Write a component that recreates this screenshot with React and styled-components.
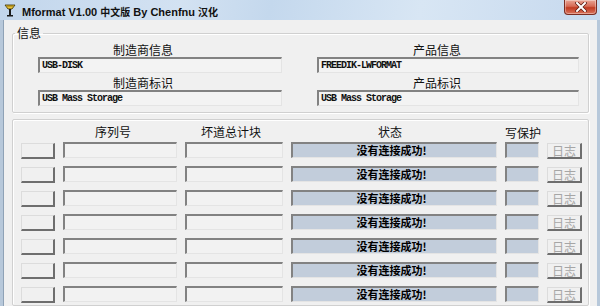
import React from 'react';
import styled, { createGlobalStyle, css } from 'styled-components';

const GlobalStyle = createGlobalStyle`
  html, body {
    margin: 0;
    padding: 0;
    background: #f0f0f0;
  }
  body {
    font-family: "Noto Sans CJK SC", "Liberation Sans", sans-serif;
  }
`;

const manufacturer = { info: 'USB-DISK', id: 'USB Mass Storage' };
const product = { info: 'FREEDIK-LWFORMAT', id: 'USB Mass Storage' };
const devices = Array.from({ length: 7 }, (_, i) => ({
  key: i,
  serial: '',
  badBlocks: '',
  status: '没有连接成功!',
}));

export default function App() {
  return (
    <React.Fragment>
      <GlobalStyle />
      <Window>
        <TitleBar>
          <AppIcon />
          <Title>
            Mformat V1.00 <Cjk>中文版</Cjk> By Chenfnu <Cjk>汉化</Cjk>
          </Title>
          <CloseButton>
            <CloseGlyph />
          </CloseButton>
        </TitleBar>
        <Body>
          <InfoGroup>
            <Legend>信息</Legend>
            <InfoGrid>
              <Label $shift={17}>制造商信息</Label>
              <Label $shift={11}>产品信息</Label>
              <InfoField>{manufacturer.info}</InfoField>
              <InfoField>{product.info}</InfoField>
              <Label $shift={17}>制造商标识</Label>
              <Label $shift={11}>产品标识</Label>
              <InfoField>{manufacturer.id}</InfoField>
              <InfoField>{product.id}</InfoField>
            </InfoGrid>
          </InfoGroup>

          <DeviceGroup>
            <HeaderRow>
              <span />
              <ColHead $shift={7}>序列号</ColHead>
              <ColHead $shift={3}>坏道总计块</ColHead>
              <ColHead $shift={4}>状态</ColHead>
              <ColHead $wide>写保护</ColHead>
              <span />
            </HeaderRow>
            <DeviceRows>
              {devices.map((d) => (
                <React.Fragment key={d.key}>
                  <PlainButton />
                  <SunkenField>{d.serial}</SunkenField>
                  <SunkenField>{d.badBlocks}</SunkenField>
                  <StatusField>{d.status}</StatusField>
                  <StatusField />
                  <PlainButton $disabled>日志</PlainButton>
                </React.Fragment>
              ))}
            </DeviceRows>
          </DeviceGroup>
        </Body>
      </Window>
    </React.Fragment>
  );
}

function AppIcon() {
  return (
    <IconBox viewBox="0 0 12 13">
      <path d="M1 1 L11 1 L8 5 L4 5 Z" fill="#e8c23a" stroke="#3a3000" strokeWidth="0.8" />
      <path d="M3 2 L9 2" stroke="#8a6a00" strokeWidth="0.8" />
      <rect x="5" y="5" width="2" height="6" fill="#1c1c1c" />
      <rect x="3" y="11" width="6" height="1.5" fill="#1c1c1c" />
    </IconBox>
  );
}

function CloseGlyph() {
  return (
    <svg width="12" height="10" viewBox="0 0 12 10">
      <path d="M2 1 L10 9 M10 1 L2 9" stroke="#5a1a12" strokeWidth="3.4" strokeLinecap="square" />
      <path d="M2 1 L10 9 M10 1 L2 9" stroke="#ffffff" strokeWidth="2" strokeLinecap="square" />
    </svg>
  );
}

const Window = styled.div`
  width: 600px;
  height: 306px;
  overflow: hidden;
  display: flex;
  flex-direction: column;
  background: #f0f0f0;
`;

const TitleBar = styled.div`
  height: 20px;
  flex: none;
  display: flex;
  align-items: center;
  padding: 0 3px 0 4px;
  background: linear-gradient(100deg, #c2d6ec 0%, #d3e2f2 30%, #c4d8ed 45%, #d8e6f4 70%, #c6d9ee 100%);
`;

const IconBox = styled.svg`
  width: 12px;
  height: 13px;
  flex: none;
  margin-right: 6px;
`;

const Title = styled.div`
  font-family: "Liberation Sans", "Noto Sans CJK SC", sans-serif;
  font-weight: bold;
  font-size: 11px;
  color: #111;
  white-space: nowrap;
  padding-top: 2px;
`;

const Cjk = styled.span`
  font-family: "Noto Sans CJK SC", sans-serif;
  font-size: 10px;
`;

const CloseButton = styled.div`
  margin-left: auto;
  align-self: flex-start;
  width: 33px;
  height: 15px;
  box-sizing: border-box;
  display: flex;
  align-items: center;
  justify-content: center;
  border: 1px solid #7b2d22;
  border-top: none;
  border-radius: 0 0 4px 4px;
  background: linear-gradient(to bottom, #e9a595 0%, #d66a55 45%, #c13b22 55%, #d9745d 100%);
  box-shadow: inset 0 0 0 1px rgba(255, 255, 255, 0.35);
`;

const Body = styled.div`
  flex: 1;
  display: flex;
  flex-direction: column;
  padding: 0 8px 0 9px;
  border-left: 3px solid #b7c8da;
  border-right: 3px solid #b7c8da;
  box-shadow: inset 1px 0 0 #8fa2b6;
`;

const groupBorder = css`
  border: 1px solid #d0d0d0;
  border-radius: 2px;
  box-shadow: inset 1px 1px 0 #ffffff, 1px 1px 0 #ffffff;
`;

const InfoGroup = styled.fieldset`
  ${groupBorder};
  margin: 6px 0 0;
  min-width: 0;
  padding: 3px 9px 6px 25px;
`;

const Legend = styled.legend`
  margin-left: -23px;
  padding: 0 2px;
  font-size: 12px;
  line-height: 14px;
  color: #111;
`;

const InfoGrid = styled.div`
  display: grid;
  grid-template-columns: 244px 262px;
  column-gap: 35px;
`;

const Label = styled.div`
  font-size: 12px;
  line-height: 14px;
  height: 14px;
  color: #111;
  text-align: center;
  padding-right: ${(p) => p.$shift * 2}px;
  margin-top: 3px;
  &:nth-child(1), &:nth-child(2) {
    margin-top: 0;
  }
`;

const sunken = css`
  box-sizing: border-box;
  height: 16px;
  border-style: solid;
  border-width: 2px 1px 1px 2px;
  border-color: #828282 #e4e4e4 #e4e4e4 #828282;
`;

const InfoField = styled.div`
  ${sunken};
  background: #f3f3f3;
  font-family: "Liberation Mono", monospace;
  font-weight: bold;
  font-size: 10px;
  letter-spacing: -1px;
  line-height: 13px;
  padding-left: 2px;
  color: #111;
  white-space: nowrap;
  overflow: hidden;
`;

const DeviceGroup = styled.div`
  ${groupBorder};
  margin-top: 6px;
  flex: 1;
  padding: 5px 0 0 8px;
`;

const columns = css`
  display: grid;
  grid-template-columns: 34px 114px 98px 206px 34px 35px;
  column-gap: 8px;
`;

const HeaderRow = styled.div`
  ${columns};
  height: 14px;
  margin-bottom: 3px;
`;

const ColHead = styled.div`
  font-size: 12px;
  line-height: 14px;
  color: #111;
  text-align: center;
  white-space: nowrap;
  padding-right: ${(p) => (p.$shift || 0) * 2}px;
  margin-top: ${(p) => (p.$wide ? 1 : 0)}px;
`;

const DeviceRows = styled.div`
  ${columns};
  grid-auto-rows: 16px;
  row-gap: 8px;
`;

const SunkenField = styled.div`
  ${sunken};
  background: #f2f2f2;
`;

const StatusField = styled.div`
  ${sunken};
  background: #c2cddb;
  font-size: 11px;
  font-weight: bold;
  line-height: 13px;
  text-align: center;
  color: #000;
  padding-right: 6px;
`;

const PlainButton = styled.div`
  box-sizing: border-box;
  height: 16px;
  margin-top: 1px;
  background: #f0f0f0;
  border-style: solid;
  border-width: 1px 2px 2px 1px;
  border-color: #dcdcdc #6e6e6e #6e6e6e #dcdcdc;
  font-size: 12px;
  line-height: 13px;
  text-align: center;
  color: ${(p) => (p.$disabled ? '#a6a6a6' : '#111')};
`;
